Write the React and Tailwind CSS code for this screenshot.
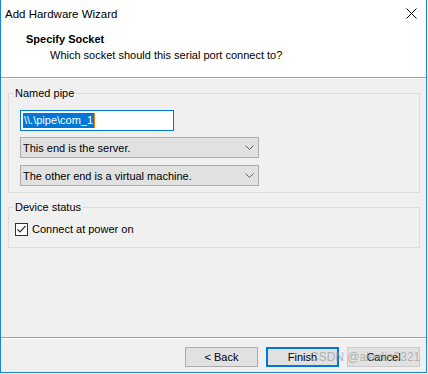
import React from 'react';

function Chevron() {
    return (
        <svg width="9" height="5" viewBox="0 0 9 5" className="shrink-0">
            <path d="M0.5 0.5 L4.5 4.5 L8.5 0.5" fill="none" stroke="#606060" strokeWidth="1" />
        </svg>
    );
}

function Select({ label }) {
    return (
        <div className="w-[239px] h-[21px] border border-[#adadad] bg-[#e1e1e1] flex items-center justify-between pl-[2px] pr-[4px]">
            <span>{label}</span>
            <Chevron />
        </div>
    );
}

function Button({ children, variant }) {
    const styles = {
        default: 'border border-[#adadad]',
        focus: 'border-2 border-[#0078d7]',
        muted: 'border border-[#cccccc]',
    };
    return (
        <div className={`w-[73px] h-[20px] bg-[#e1e1e1] flex items-center justify-center ${styles[variant || 'default']}`}>
            {children}
        </div>
    );
}

export default function App() {
    return (
        <div className="w-[428px] h-[374px] bg-white text-[11px] leading-[14px] text-black font-['Liberation_Sans',Arial,sans-serif]">
            <div className="w-[427px] h-[373px] border-x border-b border-[#1883d7] bg-[#f0f0f0] flex flex-col">
                {/* title + header */}
                <div className="h-[78px] bg-white border-b border-[#a0a0a0] flex flex-col">
                    <div className="h-[27px] flex items-center justify-between pl-[4px] pr-[9px]">
                        <span className="text-[11.5px]">Add Hardware Wizard</span>
                        <svg width="11" height="11" viewBox="0 0 11 11">
                            <path d="M0.5 0.5 L10.5 10.5 M10.5 0.5 L0.5 10.5" stroke="#000" strokeWidth="1" />
                        </svg>
                    </div>
                    <div className="pl-[25px] mt-[5px] font-bold">Specify Socket</div>
                    <div className="pl-[49px] mt-[2px]">Which socket should this serial port connect to?</div>
                </div>
                <div className="h-px bg-white" />

                <div className="flex-1 flex flex-col">
                    <fieldset className="ml-[7px] mt-[7px] w-[412px] border border-[#dcdcdc] pl-[11px] pb-[6px]">
                        <legend className="-ml-[6px] px-[1px] leading-[14px]">Named pipe</legend>
                        <div className="mt-[10px] w-[154px] h-[21px] border border-[#0078d7] bg-white flex items-center pl-[2px]">
                            <span className="bg-[#0078d7] text-white px-[1px] leading-[15px]">\\.\pipe\com_1</span>
                            <span className="w-px h-[15px] bg-[#ff8000]" />
                        </div>
                        <div className="mt-[6px]">
                            <Select label="This end is the server." />
                        </div>
                        <div className="mt-[7px]">
                            <Select label="The other end is a virtual machine." />
                        </div>
                    </fieldset>

                    <fieldset className="ml-[7px] mt-[7px] w-[412px] border border-[#dcdcdc] pl-[6px] pb-[10px]">
                        <legend className="-ml-[1px] px-[1px] leading-[14px]">Device status</legend>
                        <label className="mt-[7px] h-[16px] flex items-center gap-[4px]">
                            <span className="w-[13px] h-[13px] border border-[#333333] bg-white flex items-center justify-center">
                                <svg width="11" height="11" viewBox="0 0 11 11">
                                    <path d="M1.5 5.5 L4 8 L9.5 2" fill="none" stroke="#333" strokeWidth="1.2" />
                                </svg>
                            </span>
                            <span>Connect at power on</span>
                        </label>
                    </fieldset>
                </div>

                <div className="h-px bg-[#a0a0a0]" />
                <div className="h-px bg-white" />
                <div className="relative flex justify-end gap-[8px] pt-[8px] pb-[5px] pr-[6px]">
                    <Button>&lt; Back</Button>
                    <Button variant="focus">Finish</Button>
                    <Button variant="muted">Cancel</Button>
                    <span className="absolute left-[309px] top-[8px] text-[12px] leading-[20px] text-[#9a9a9a]/70 whitespace-nowrap pointer-events-none">
                        CSDN @alexlin0321
                    </span>
                </div>
            </div>
        </div>
    );
}
